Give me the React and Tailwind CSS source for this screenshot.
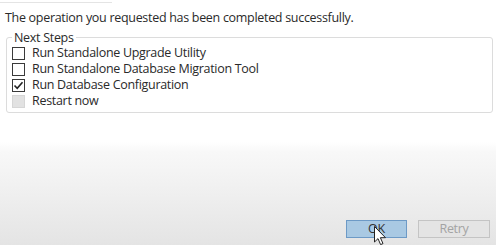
import React from 'react';

const steps = [
  { label: 'Run Standalone Upgrade Utility', state: 'off' },
  { label: 'Run Standalone Database Migration Tool', state: 'off' },
  { label: 'Run Database Configuration', state: 'on' },
  { label: 'Restart now', state: 'disabled' },
];

const Box = ({ state }) => {
  if (state === 'disabled') {
    return <span className="w-[13px] h-[13px] shrink-0 bg-[#e2e2e2] border border-[#d6d6d6]" />;
  }
  return (
    <span className="w-[13px] h-[13px] shrink-0 bg-white border border-[#3a3a3a] flex items-center justify-center">
      {state === 'on' && (
        <svg width="11" height="11" viewBox="0 0 11 11">
          <path d="M1.5 5.5 L4.2 8.3 L9.5 2.2" fill="none" stroke="#222" strokeWidth="1.6" />
        </svg>
      )}
    </span>
  );
};

const Cursor = () => (
  <svg
    className="absolute left-[374px] top-[226px]"
    width="13"
    height="20"
    viewBox="0 0 13 20"
  >
    <path
      d="M0.5 0.5 L0.5 16 L4 12.6 L6.6 18.6 L9 17.6 L6.4 11.7 L11.5 11.7 Z"
      fill="#fff"
      stroke="#222"
      strokeWidth="1"
      strokeLinejoin="round"
    />
  </svg>
);

const App = () => {
  return (
    <div
      className="relative w-[496px] h-[245px] overflow-hidden flex flex-col text-[#2a2a2a] text-[12.5px] tracking-[-0.3px] bg-[linear-gradient(to_bottom,#ffffff_0px,#ffffff_142px,#f8f8f8_152px,#e4e4e4_245px)]"
      style={{ fontFamily: '"Open Sans", "Noto Sans", sans-serif' }}
    >
      {/* leftover edge of the window above */}
      <div className="mt-[2px] h-px w-[112px] bg-[#e4e4e4]" />

      <p className="mt-[7px] pl-[5px] leading-[16px]">
        The operation you requested has been completed successfully.
      </p>

      {/* Next Steps group */}
      <fieldset className="mt-[4px] ml-[6px] mr-[3px] border border-[#dcdcdc] rounded-[3px] pl-[5px] pb-[3px]">
        <legend className="px-[2px] leading-[15px]">Next Steps</legend>
        {steps.map((s) => (
          <div key={s.label} className="h-[16px] flex items-center gap-[7px]">
            <Box state={s.state} />
            <span className="leading-[16px]">{s.label}</span>
          </div>
        ))}
      </fieldset>

      <div className="flex-1" />

      {/* Buttons */}
      <div className="flex justify-end gap-[11px] pr-[6px] pb-[7px]">
        <button className="w-[61px] h-[18px] bg-[#a9c9e3] border border-[#6d9ac6] leading-none text-[#333]">
          OK
        </button>
        <button className="w-[72px] h-[18px] bg-[#e4e4e4] border border-[#c4c4c4] leading-none text-[#a3a3a3]">
          Retry
        </button>
      </div>

      <Cursor />
    </div>
  );
};

export default App;
